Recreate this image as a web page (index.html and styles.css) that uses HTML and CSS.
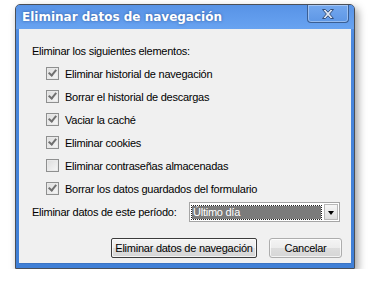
FILE: index.html
```html
<!DOCTYPE html>
<html lang="es">
<head>
  <meta charset="UTF-8" />
  <title>Eliminar datos de navegación</title>
  <link rel="stylesheet" href="styles.css">
</head>
<body>
  <div class="window">
    <div class="titlebar">
      <span class="title">Eliminar datos de navegación</span>
      <button class="close-btn">
        <svg width="12" height="10" viewBox="0 0 12 10">
          <path d="M0.5 0.5 H3.5 L6 3.2 L8.5 0.5 H11.5 L7.7 5 L11.5 9.5 H8.5 L6 6.8 L3.5 9.5 H0.5 L4.3 5 Z" fill="#dfe7f3" stroke="#34507c" stroke-width="1" stroke-linejoin="round"/>
        </svg>
      </button>
    </div>
    <div class="client">
      <p class="intro">Eliminar los siguientes elementos:</p>
      <ul class="options">
        <li><span class="check on"></span>Eliminar historial de navegación</li>
        <li><span class="check on"></span>Borrar el historial de descargas</li>
        <li><span class="check on"></span>Vaciar la caché</li>
        <li><span class="check on"></span>Eliminar cookies</li>
        <li><span class="check"></span>Eliminar contraseñas almacenadas</li>
        <li><span class="check on"></span>Borrar los datos guardados del formulario</li>
      </ul>
      <div class="period">
        <span class="period-label">Eliminar datos de este período:</span>
        <div class="select">
          <span class="select-value">Último día</span>
          <span class="select-arrow"></span>
        </div>
      </div>
      <div class="actions">
        <button class="btn btn-default">Eliminar datos de navegación</button>
        <button class="btn btn-cancel">Cancelar</button>
      </div>
    </div>
  </div>
</body>
</html>
```

FILE: styles.css
```css
body {
  margin: 0;
  background-color: #fff;
  font-family: "Liberation Sans", Arial, sans-serif;
  font-size: 11px;
  letter-spacing: -0.25px;
  color: #000;
}
.window {
  width: 332px;
  height: 263px;
  margin: 4px 0 0 15px;
  padding: 0 3px;
  border: 1px solid #4a4f57;
  border-radius: 5px 5px 0 0;
  background: linear-gradient(#5b97ea, #4a88de 40px, #3f7fd6);
  box-shadow: 3px 4px 9px rgba(0, 0, 0, 0.38);
  display: flex;
  flex-direction: column;
}
.titlebar {
  height: 24px;
  display: flex;
  justify-content: space-between;
  align-items: flex-start;
  background: linear-gradient(#5893e6, #68a3f1);
  margin: 0 -3px;
  padding: 0 5px 0 6px;
  border-radius: 4px 4px 0 0;
}
.title {
  font-family: "DejaVu Sans", Verdana, sans-serif;
  font-weight: bold;
  font-size: 12px;
  letter-spacing: 0;
  color: #fff;
  line-height: 24px;
  text-shadow: 0 0 3px rgba(20, 50, 110, 0.6);
}
.close-btn {
  width: 42px;
  height: 18px;
  margin-top: 0;
  padding: 0;
  border: 1px solid #3a5e93;
  border-top: none;
  border-radius: 0 0 4px 4px;
  background: linear-gradient(#74a8ee, #5e97e6);
  box-shadow: inset 0 0 0 1px rgba(255, 255, 255, 0.35);
  display: flex;
  align-items: center;
  justify-content: center;
}
.client {
  flex: 1;
  background-color: #f0f0f0;
  padding: 15px 9px 0 13px;
  margin-bottom: 4px;
  border: 1px solid #3b74c4;
  border-width: 0 0 1px 0;
}
.intro {
  margin: 0;
  line-height: 14px;
}
.options {
  list-style: none;
  margin: 4px 0 0 0;
  padding: 0;
}
.options li {
  height: 23px;
  display: flex;
  align-items: center;
  padding-left: 14px;
}
.check {
  width: 11px;
  height: 11px;
  border: 1px solid #8e8f8f;
  background: linear-gradient(135deg, #dcdcdc, #f7f7f7);
  box-shadow: inset 0 0 0 1px #e9e9e9;
  margin-right: 6px;
  position: relative;
}
.check.on::after {
  content: "";
  position: absolute;
  left: 3px;
  top: 0px;
  width: 3px;
  height: 6px;
  border: solid #707070;
  border-width: 0 2px 2px 0;
  transform: rotate(40deg);
}
.period {
  display: flex;
  align-items: center;
  height: 20px;
  margin-top: 2px;
}
.period-label {
  width: 157px;
}
.select {
  width: 146px;
  height: 18px;
  border: 1px solid #a5a5a5;
  background-color: #fff;
  display: flex;
  align-items: center;
  padding: 0 1px 0 2px;
  box-sizing: content-box;
}
.select-value {
  flex: 1;
  height: 13px;
  line-height: 13px;
  background-color: #7b7b7b;
  color: #fff;
  outline: 1px dotted #222;
  outline-offset: 0;
  padding-left: 1px;
  margin-right: 3px;
}
.select-arrow {
  width: 14px;
  height: 16px;
  border: 1px solid #b8b8b8;
  box-sizing: border-box;
  background: linear-gradient(#f6f6f6, #dedede);
  position: relative;
}
.select-arrow::after {
  content: "";
  position: absolute;
  left: 3px;
  top: 6px;
  border-left: 3.5px solid transparent;
  border-right: 3.5px solid transparent;
  border-top: 4px solid #000;
}
.actions {
  display: flex;
  justify-content: flex-end;
  gap: 12px;
  margin-top: 16px;
}
.btn {
  height: 20px;
  padding: 0;
  font-family: "Liberation Sans", Arial, sans-serif;
  font-size: 11px;
  letter-spacing: -0.25px;
  color: #000;
  border: 1px solid #adadad;
  border-radius: 3px;
  background: linear-gradient(#f4f4f4, #ececec 50%, #dddddd 51%, #d6d6d6);
  box-shadow: inset 0 0 0 1px rgba(255, 255, 255, 0.7);
}
.btn-default {
  width: 146px;
  border-color: #3c3c3c;
  border-radius: 2px;
}
.btn-cancel {
  width: 73px;
}
```
